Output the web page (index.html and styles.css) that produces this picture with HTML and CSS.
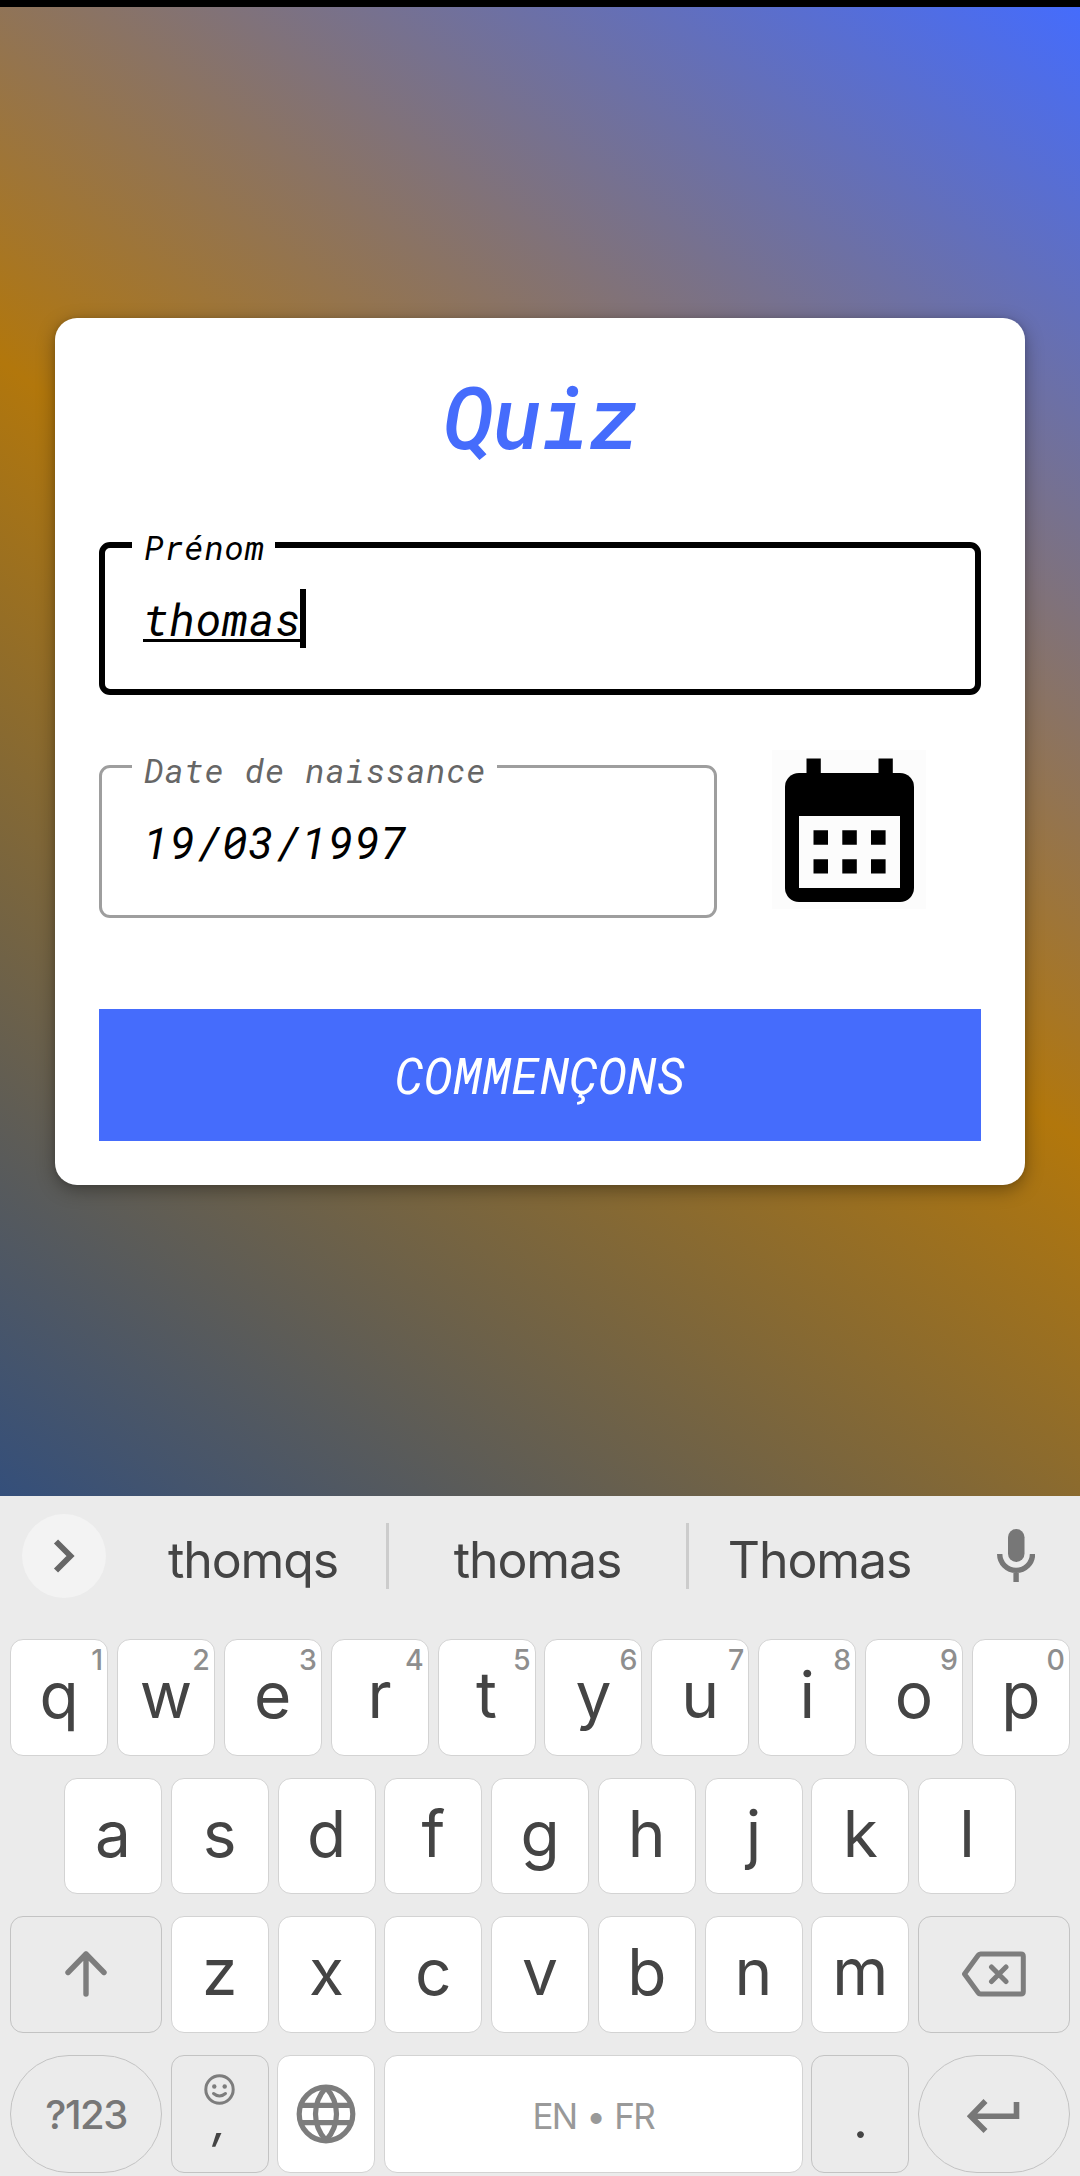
FILE: index.html
```html
<!DOCTYPE html>
<html lang="fr">
<head>
<meta charset="utf-8">
<title>Quiz</title>
<link rel="stylesheet" href="styles.css">
</head>
<body>
<main class="screen">
  <section class="card">
    <h1 class="title">Quiz</h1>
    <div class="field focused">
      <span class="label">Prénom</span>
      <span class="value typed">thomas</span><span class="caret"></span>
    </div>
    <div class="date-row">
      <div class="field date">
        <span class="label">Date de naissance</span>
        <span class="value">19/03/1997</span>
      </div>
      <svg class="calendar" viewBox="0 0 154 159">
        <rect width="154" height="159" fill="#fcfcfc"/>
        <path d="M34.5 8.5h14.3V24H34.5zM106.5 8.5h14.3V24h-14.3z"/>
        <rect x="13" y="23" width="129" height="129" rx="14"/>
        <path fill="#fcfcfc" d="M27 66h101v72H27z"/>
        <path d="M41.5 80.3H56v14.4H41.5zM70.3 80.3h14.5v14.4H70.3zM99 80.3h14.6v14.4H99zM41.5 109.2H56v14.4H41.5zM70.3 109.2h14.5v14.4H70.3zM99 109.2h14.6v14.4H99z"/>
      </svg>
    </div>
    <button class="start">COMMENÇONS</button>
  </section>
</main>
<section class="keyboard">
  <div class="suggestions">
    <div class="expand">
      <svg width="22" height="34" viewBox="0 0 22 34" fill="none" stroke="#666" stroke-width="5.800"><path d="M3 2.500L17.500 17 3 31.500"/></svg>
    </div>
    <span class="word first">thomqs</span>
    <span class="word">thomas</span>
    <span class="word">Thomas</span>
    <svg class="mic" viewBox="0 0 38 53"><rect x="11" width="16.500" height="33" rx="8.250" fill="#777"/><path d="M2.700 25a16.400 16.400 0 0 0 32.800 0M19.100 41v12" fill="none" stroke="#777" stroke-width="5.400"/></svg>
  </div>
  <div class="row">
    <div class="key">q<span class="hint">1</span></div>
    <div class="key">w<span class="hint">2</span></div>
    <div class="key">e<span class="hint">3</span></div>
    <div class="key">r<span class="hint">4</span></div>
    <div class="key">t<span class="hint">5</span></div>
    <div class="key">y<span class="hint">6</span></div>
    <div class="key">u<span class="hint">7</span></div>
    <div class="key">i<span class="hint">8</span></div>
    <div class="key">o<span class="hint">9</span></div>
    <div class="key">p<span class="hint">0</span></div>
  </div>
  <div class="row">
    <div class="key">a</div>
    <div class="key">s</div>
    <div class="key">d</div>
    <div class="key">f</div>
    <div class="key">g</div>
    <div class="key">h</div>
    <div class="key">j</div>
    <div class="key">k</div>
    <div class="key">l</div>
  </div>
  <div class="row">
    <div class="key wide alt">
      <svg width="42" height="46" viewBox="0 0 42 46" fill="none" stroke="#7d7d7d" stroke-width="5.400" stroke-linecap="round" stroke-linejoin="round"><path d="M21 43V3M3 21.500L21 3l18 18.500"/></svg>
    </div>
    <div class="key">z</div>
    <div class="key">x</div>
    <div class="key">c</div>
    <div class="key">v</div>
    <div class="key">b</div>
    <div class="key">n</div>
    <div class="key">m</div>
    <div class="key wide alt">
      <svg width="64" height="46" viewBox="0 0 64 46" fill="none" stroke="#7d7d7d" stroke-width="5" stroke-linejoin="round" stroke-linecap="round"><path d="M18.500 3H59q2.300 0 2.300 2.300v35.400q0 2.300-2.300 2.300H18.500q-1.500 0-2.500-1.500L2.500 23 16 4.500q1-1.500 2.500-1.500zM29.500 16l14.500 14.500M44 16L29.500 30.500"/></svg>
    </div>
  </div>
  <div class="row last">
    <div class="key wide alt pill symbols">?123</div>
    <div class="key alt comma">
      <svg width="31" height="31" viewBox="0 0 31 31" fill="none" stroke="#7d7d7d" stroke-width="3"><circle cx="15.500" cy="15.500" r="13.700"/><path d="M9.500 19.500q6 5 12 0" stroke-linecap="round"/><circle cx="10.300" cy="12.500" r="2.200" fill="#7d7d7d" stroke="none"/><circle cx="20.700" cy="12.500" r="2.200" fill="#7d7d7d" stroke="none"/></svg>
      <span>,</span>
    </div>
    <div class="key globe">
      <svg width="60" height="60" viewBox="0 0 60 60" fill="none" stroke="#7d7d7d" stroke-width="5.200"><circle cx="30" cy="30" r="26.800"/><path d="M5 21.300h50M5 38.700h50M30 3.500C16 19 16 41 30 56.500M30 3.500C44 19 44 41 30 56.500"/></svg>
    </div>
    <div class="key space">EN • FR</div>
    <div class="key alt dot">.</div>
    <div class="key wide alt pill">
      <svg class="enter" width="54" height="34" viewBox="0 0 54 34" fill="none" stroke="#777" stroke-width="5.600"><path d="M49.500 3v14.200H5M18.500 2L3.700 17.200 18.500 32"/></svg>
    </div>
  </div>
</section>
</body>
</html>
```
FILE: styles.css
```css
* { box-sizing: border-box; }

body {
  display: flow-root;
  margin: 0;
  width: 1080px;
  height: 2176px;
  overflow: hidden;
  background: #000;
  font-family: Inter, sans-serif;
}

.screen {
  height: 1490px;
  margin-top: 7px;
  padding: 311px 55px 0;
  background: linear-gradient(35.94deg, #344f7b, #b2770c 50%, #456cfc);
}

.card {
  height: 867px;
  padding: 44px;
  border-radius: 22px;
  background: #fff;
  box-shadow: 0 5px 18px rgba(0, 0, 0, .34), 0 0 4px rgba(0, 0, 0, .1);
  font-family: "Roboto Mono", "DejaVu Sans Mono", monospace;
  font-style: italic;
}

.title {
  height: 118px;
  margin: 0;
  font-size: 86px;
  line-height: 108px;
  font-weight: 500;
  letter-spacing: -2px;
  text-align: center;
  color: #456cfc;
}

.field {
  position: relative;
  display: flex;
  height: 153px;
  border: 3px solid #9e9e9e;
  border-radius: 11px;
  padding: 45px 0 0 41px;
}

.focused {
  margin-top: 62px;
  border: 6px solid #000;
  padding: 41px 0 0 38px;
}

.label {
  position: absolute;
  left: 30px;
  top: -18px;
  padding: 0 10px 0 12px;
  background: #fff;
  font-size: 33px;
  line-height: 40px;
  letter-spacing: .78px;
  color: #666;
}

.focused .label {
  left: 27px;
  top: -21px;
  color: #000;
}

.value {
  font-size: 44px;
  line-height: 59px;
  letter-spacing: .55px;
}

.typed {
  padding-top: 1px;
  text-decoration: underline;
  text-decoration-thickness: 2.5px;
  text-underline-offset: 3px;
  text-decoration-skip-ink: none;
}

.caret {
  width: 6px;
  height: 59px;
  margin-left: -1px;
  background: #000;
}

.date-row {
  display: flex;
  align-items: flex-start;
  gap: 55px;
  margin-top: 55px;
}

.date {
  width: 618px;
  margin-top: 15px;
}

.calendar { width: 154px; height: 159px; }

.start {
  display: block;
  width: 100%;
  height: 132px;
  margin-top: 91px;
  padding: 0;
  border: 0;
  background: #456cfc;
  color: #fff;
  font: italic 49.500px/132px "Roboto Mono", "DejaVu Sans Mono", monospace;
}

.keyboard {
  position: relative;
  height: 680px;
  margin-top: -1px;
  padding: 18px 10px 0;
  background: #ebebeb;
  color: #444;
}

.suggestions {
  display: flex;
  height: 125px;
  padding-left: 12px;
}

.expand {
  display: flex;
  align-items: center;
  justify-content: center;
  width: 84px;
  height: 84px;
  border-radius: 50%;
  background: #f3f3f3;
}

.word {
  width: 300px;
  height: 66px;
  margin-top: 9px;
  border-left: 3px solid #ccc;
  font-size: 50px;
  line-height: 74px;
  letter-spacing: -1.100px;
  text-align: center;
}

.word.first { width: 280px; padding-left: 14px; border: 0; }
.word:nth-of-type(3) { width: 264px; }

.mic { width: 38px; height: 53px; margin: 15px 0 0 47px; }

.row {
  display: flex;
  justify-content: space-between;
  margin-bottom: 22px;
}

.row:nth-of-type(3) { padding: 0 54px; }

.key {
  position: relative;
  flex: none;
  width: 98px;
  height: 116.600px;
  border: 1px solid #d3d3d3;
  border-radius: 13px;
  background: #fff;
  font-size: 64px;
  line-height: 109px;
  text-align: center;
}

.alt { background: #ebebeb; border-color: #c3c3c3; }

.wide {
  display: flex;
  align-items: center;
  justify-content: center;
  width: 152px;
}

.hint {
  position: absolute;
  top: 3px;
  right: 4px;
  font-size: 28.500px;
  line-height: 34px;
  font-weight: 500;
  color: #8e8e8e;
}

.last .key { height: 118px; }
.last .pill { border-radius: 59px; }
.symbols { font-size: 40px; font-weight: 500; letter-spacing: -1.500px; color: #777; padding-top: 2px; }

.comma { display: flex; flex-direction: column; align-items: center; padding-top: 18px; }
.comma svg { flex: none; }
.comma span { font-size: 50px; line-height: 30px; font-style: italic; }

.globe { display: flex; align-items: center; justify-content: center; }
.last .space { width: 419px; font-size: 35px; line-height: 121px; letter-spacing: -1.600px; word-spacing: 1.500px; color: #999; }
.dot { font-size: 52px; line-height: 128px; }
.enter { margin-top: 5px; }
```
